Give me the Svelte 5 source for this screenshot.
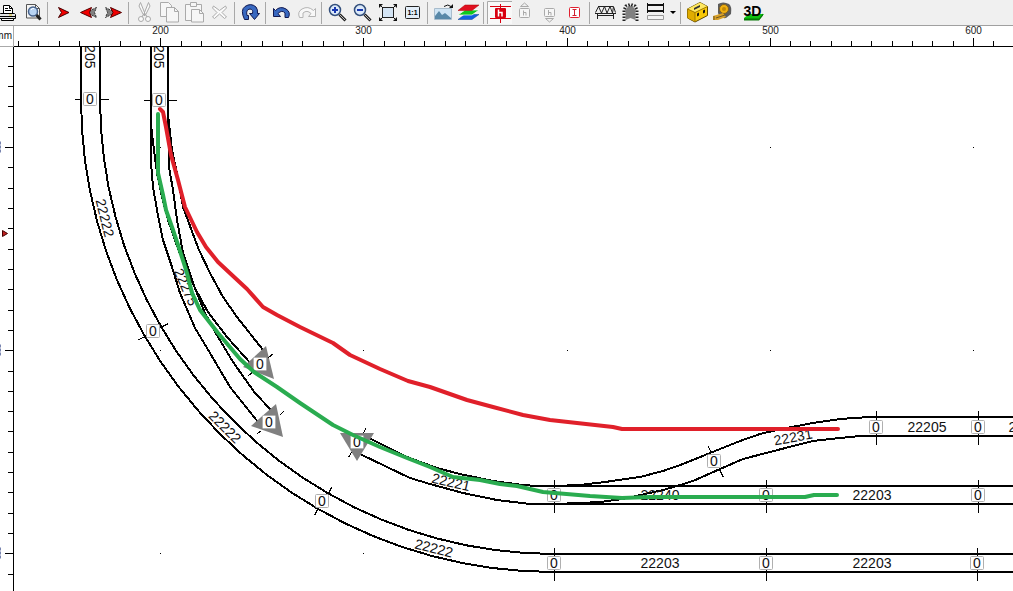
<script>
  const pressedHatch =
    '<path d="M0 1h25v23H0z" fill="#f8f8f8"/><path d="M0.5 24V1.5H25" fill="none" stroke="#a8a8a8"/>';

  const groups = [
    [
      { name: 'Print', art: '<path d="M8.500 13.500V5.500H14.500L17.500 8.500V13.500z" fill="#fff" stroke="#000"/><path d="M14.500 5.500v3h3M10 8.500h3M10 10.500h6" stroke="#000" fill="none"/><path d="M5.500 13.500h14l1 1v4h-16v-4z" fill="#e4e4e4" stroke="#000"/><path d="M5 16.500h15" stroke="#000"/><path d="M14 15h3" stroke="#d8c020"/><path d="M6.500 18.500h12v2h-12z" fill="#fff" stroke="#000"/>' },
      { name: 'Print preview', art: '<path d="M6.500 4.500h9l4 4v9.500h-13z" fill="#f4f4f4" stroke="#555"/><path d="M15.500 4.500v4h4" fill="none" stroke="#555"/><circle cx="13" cy="11.500" r="4.500" fill="#b8d4f4" stroke="#46628c" stroke-width="1.500"/><path d="M11 10q1-2 3-1.500" stroke="#fff" fill="none"/><path d="M16.500 15l4 4.500" stroke="#222" stroke-width="3"/>' }
    ],
    [
      { name: 'Start', art: '<path d="M7.500 7.500L18 12.500L7.500 17.500L10.500 12.500z" fill="#f00000" stroke="#400" />' },
      { name: 'Step back', art: '<path d="M20.500 7.500L10 12.500L20.500 17.500L18.500 12.500z" fill="#808080" stroke="#333" stroke-dasharray="2 1"/><path d="M15.500 7.500L4.500 12.500L15.500 17.500L13.500 12.500z" fill="#f00000" stroke="#500"/>' },
      { name: 'Step forward', art: '<path d="M4.500 7.500L14.500 12.500L4.500 17.500L6.500 12.500z" fill="#808080" stroke="#333" stroke-dasharray="2 1"/><path d="M9.500 7.500L20.500 12.500L9.500 17.500L12 12.500z" fill="#f00000" stroke="#500"/>' }
    ],
    [
      { name: 'Cut', art: '<g fill="#fafafa" stroke="#aaa"><path d="M8.500 2.500L7 6l4.500 9h2L9.500 5zM16.500 2.500L18 6l-4.500 9h-2L15.500 5z"/><circle cx="9" cy="19" r="2.500"/><circle cx="16" cy="19" r="2.500"/><path d="M12.500 12v4M11 15l-1 2M14 15l1 2" fill="none"/></g>' },
      { name: 'Copy', art: '<g fill="#f6f6f6" stroke="#aaa"><path d="M3.500 2.500h8l3 3v11h-11z"/><path d="M9.500 7.500h8l4 4v10.500h-12z"/><path d="M17.500 7.500v4h4" fill="none"/></g>' },
      { name: 'Paste', art: '<g fill="#f6f6f6" stroke="#aaa"><path d="M3.500 4.500h16v16h-16z"/><path d="M8.500 2.500h6v4h-6z"/><path d="M9.500 9.500h8l4 4v8.500h-12z"/><path d="M17.500 9.500v4h4" fill="none"/></g>' },
      { name: 'Delete', art: '<path d="M6.500 6l6 4.500l6-4.500l1 2l-4.500 4.500l4.500 4.500l-2 1.500l-5-4.500l-5 4.500l-2-1.500l4.500-4.500l-4.500-4.500z" fill="#fafafa" stroke="#aaa"/>' }
    ],
    [
      { name: 'Rotate', art: '<path d="M10.500 19.500H6.500Q2 10 7 6.500Q13 2.500 18 7Q20 9.500 19.500 13.500H21.500L16.500 19.500L11.500 13.500H14.500Q15.500 9.500 12 9Q7.500 9.500 9 15.500H10.500z" fill="#3868c0" stroke="#101850"/>' }
    ],
    [
      { name: 'Undo', art: '<path d="M4.500 8.500V16.500H11.500L9 13.500Q13 9.500 16 13V17.500H19.500Q22 12 17 9Q11 5.500 6.500 10.500z" fill="#3868c0" stroke="#101850"/>' },
      { name: 'Redo', art: '<path d="M21.500 8.500V16.500H14.500L17 13.500Q13 9.500 9 13V17.500H5.500Q3 12 8 9Q14 5.500 19.500 10.500z" fill="#f8f8f8" stroke="#b4b4b4"/>' }
    ],
    [
      { name: 'Zoom in', art: '<path d="M14.500 14.500l6 6" stroke="#222" stroke-width="3"/><path d="M15 15l5 5" stroke="#bbb"/><circle cx="10" cy="10" r="5.500" fill="#dceafa" stroke="#34507c" stroke-width="1.500"/><path d="M7 10h6M10 7v6" stroke="#1838b0" stroke-width="2"/>' },
      { name: 'Zoom out', art: '<path d="M14.500 14.500l6 6" stroke="#222" stroke-width="3"/><path d="M15 15l5 5" stroke="#bbb"/><circle cx="10" cy="10" r="5.500" fill="#dceafa" stroke="#34507c" stroke-width="1.500"/><path d="M7 10h6" stroke="#1838b0" stroke-width="2"/>' },
      { name: 'Zoom to fit', art: '<path d="M7.500 7.500h11v10h-11z" fill="#d4e4f4" stroke="#222"/><path d="M4 4h4l-4 4zM22 4h-4l4 4zM4 21h4l-4-4zM22 21h-4l4-4z" fill="#111"/><path d="M5 5l3 3M21 5l-3 3M5 20l3-3M21 20l-3-3" stroke="#111"/>' },
      { name: 'Actual size', art: '<rect x="5.500" y="6.500" width="14" height="12" rx="1" fill="#e2edf8" stroke="#222"/><text x="12.500" y="15" text-anchor="middle" font-size="7" font-weight="700" font-family="Liberation Sans, sans-serif">1:1</text>' }
    ],
    [
      { name: 'Background image', art: '<path d="M3.500 8.500h17v11h-17z" fill="#cfe4f4" stroke="#a8bccc"/><path d="M4 19v-3l4-5l3 4l3-2l6 5v1z" fill="#5888a8"/><path d="M13 6.500q4-3 7 0" fill="none" stroke="#111"/><path d="M22 4v4h-4z" fill="#111"/>' },
      { name: 'Layers', art: '<path d="M2 19.500l7-5h14l-7 5z" fill="#1060e0" stroke="#104090" stroke-width=".5"/><path d="M2 15l7-5h14l-7 5z" fill="#10c820" stroke="#fff" stroke-width=".7"/><path d="M2 10.500l7-5.500h14l-7 5.500z" fill="#e01020" stroke="#a00" stroke-width=".5"/>' }
    ],
    [
      { name: 'Current height', pressed: true, art: pressedHatch + '<path d="M3 6.500h21M3 18.500h21M13.500 4v19" stroke="#d80010"/><rect x="8" y="8" width="11" height="10" rx="1" fill="#d80010"/><path d="M11.500 9.500v7M11.500 12.500h3.500v4" stroke="#fff" stroke-width="1.500" fill="none"/>' },
      { name: 'Height above', art: '<g fill="none" stroke="#aaa"><rect x="7.500" y="8.500" width="10" height="9" rx="1" fill="#f6f6f6"/><path d="M11.500 10.500v5M11.500 12.500h2.500v3M8.500 6.500h8l-4-3.500z"/></g>' },
      { name: 'Height below', art: '<g fill="none" stroke="#aaa"><rect x="7.500" y="8.500" width="10" height="8" rx="1" fill="#f6f6f6"/><path d="M11.500 10v5M11.500 12.500h2.500v3M8.500 18.500h8l-4 3.500z"/></g>' },
      { name: 'Height text', art: '<rect x="7.500" y="7.500" width="10" height="10" rx="1" fill="#fff" stroke="#e02030"/><path d="M10.500 9.500h4M10.500 15.500h4M12.500 9.500v6" stroke="#d02030"/>' }
    ],
    [
      { name: 'Bridge', art: '<path d="M2 13.500h21M5 6.500h15M5 15.500h15M5.500 6.500L2.500 12.500M5.500 6.500L8.500 13L11.500 6.500L14 13L17 6.500L19.500 13L20.500 6.500L22.500 12.500M4.500 14v5M20.500 14v5" fill="none" stroke="#222"/>' },
      { name: 'Tunnel', art: '<path d="M7.500 20V10l3-4h4l3 4v10l-5-2z" fill="#808080"/><path d="M6 21V10L8 6l4-1.500h1L17 6l2 4v11" fill="none" stroke="#222" stroke-width="3" stroke-dasharray="1.500 1.500"/>' },
      { name: 'Track style', drop: true, art: '<path d="M4 5h17M4 11h17" stroke="#111" stroke-width="2"/><path d="M4.500 3v10M20.500 3v10" stroke="#111"/><path d="M4.500 15.500h16v4h-16z" fill="#f4f4f4" stroke="#999"/>' }
    ],
    [
      { name: 'Toolbox', art: '<path d="M3.500 9L16 2.500l7.500 4v9L11 22l-7.500-4z" fill="#f8c808" stroke="#604800"/><path d="M3.500 9L11 12.500v9L3.500 18z" fill="#e0ac00"/><path d="M3.500 9L16 2.500l7.500 4L11 12.500z" fill="#ffe860"/><path d="M11 12.500V22M3.500 9L11 12.500L23.500 6.500" fill="none" stroke="#a07800"/><path d="M10 8l6-3v2l-6 3z" fill="#333"/><path d="M13 13.500l2-1v3l-2 1zM19 10.500l2-1v3l-2 1z" fill="#111"/>' },
      { name: 'Measure', art: '<path d="M9 4q5-3 11 0q3 2 2 10l-5 4q-6 1-8-5z" fill="#5c5c5c"/><circle cx="15" cy="9" r="4.500" fill="#f0b010" stroke="#806020"/><circle cx="15" cy="9" r="2" fill="#c08808"/><path d="M4 16l10-3l3 4l-8 3l-5 0z" fill="#d8a028"/><path d="M7 18l9-3M5 20v-4" stroke="#705820"/>' }
    ],
    [
      { name: '3D view', art: '<path d="M4 18l5-4h15l-5 6H4z" fill="#10c010"/><path d="M4 18.500h15l4-5v2l-4 5H4z" fill="#067806"/><text x="12.500" y="16" text-anchor="middle" font-size="14" font-weight="700" font-family="Liberation Sans, sans-serif">3D</text>' }
    ]
  ];

  const PITCH = 20.32;
  let rulerWidth = $state(1000);
  let rulerHeight = $state(545);

  const hTicks = $derived(
    Array.from({ length: 200 }, (_, i) => i - 7)
      .map((k) => ({
        x: Math.round(160.2 + k * PITCH) + 0.5,
        major: k % 10 === 0,
        label: 200 + k * 10
      }))
      .filter((t) => t.x < rulerWidth + (t.major ? 2 : 14))
  );
  const vTicks = $derived(
    Array.from({ length: 120 }, (_, i) => i - 4)
      .map((k) => ({ y: Math.round(147 + k * PITCH) + 0.5, major: k % 10 === 0 }))
      .filter((t) => t.y < rulerHeight + 47)
  );

  const gridDots = [[160, 147], [770, 147], [973, 147], [160, 350], [363, 350], [567, 350], [770, 350], [973, 350], [160, 553], [363, 553]];

  // Points along a quarter circle that runs from straight down to straight right.
  function arc(cx, cy, r) {
    const n = 24;
    return Array.from({ length: n + 1 }, (_, i) => {
      const a = (i / n) * (Math.PI / 2);
      return `${(cx - r * Math.cos(a)).toFixed(1)},${(cy + r * Math.sin(a)).toFixed(1)}`;
    }).join(' ');
  }

  const rails = [
    `81,40 ${arc(554, 99, 473)} 3000,572`,
    `100,40 ${arc(555, 99, 455)} 3000,554`,
    '151,40 151,147 151,163 153,187 157,210 163,240 172,267 180,293 195,328 210,353 230,387 258,422',
    '168,40 168,117 169,167 173,190 177,220 183,253 193,283 205,313 218,337 233,362 245,379 255,393 271,410',
    '151,125 154,150 157,173 162,197 168,220 176,243 185,267 197,292 208,312 227,337 252,365',
    '168,115 172,150 177,173 183,207 190,226 199,250 210,273 223,297 237,317 263,350',
    '369,438 407,457 437,468 460,474 493,481 523,485 537,486 3000,486',
    '360,454 387,467 410,478 430,484 463,493 497,500 530,504 3000,504',
    '554,486 580,485 605,482 640,477 663,471 683,464 710,453 740,441 760,434 777,430 797,426 813,423 840,419 870,417 3000,417',
    '554,504 580,503 600,502 623,499 645,494 663,490 677,486 693,481 720,469 743,459 770,452 797,445 813,441 840,438 860,436 3000,436'
  ];

  const joints = [
    [74, 99, 81, 99], [100, 99, 108, 99], [143, 100, 150, 100], [168, 100, 176, 100],
    [138, 339, 145, 336], [160, 327, 168, 323], [331, 487, 328, 493], [314, 515, 317, 509],
    [708, 446, 711, 453], [719, 469, 723, 477],
    [273, 353, 268, 357], [248, 375, 253, 371], [283, 411, 279, 415], [257, 433, 261, 430],
    [365, 428, 363, 433], [348, 457, 351, 452],
    [876, 410, 876, 423], [876, 430, 876, 444], [978, 410, 978, 423], [978, 430, 978, 444],
    [554, 479, 554, 490], [554, 500, 554, 512], [766, 479, 766, 490], [766, 500, 766, 512], [978, 479, 978, 490], [978, 500, 978, 512],
    [554, 547, 554, 558], [554, 568, 554, 580], [766, 547, 766, 558], [766, 568, 766, 580], [977, 547, 977, 558], [977, 568, 977, 580]
  ];

  const openEnds = ['266,346 274,379 243,367', '276,404 283,437 251,426', '340,433 374,433 357,461'];

  const heights = [
    [90, 99], [159, 100], [153, 331], [322, 501], [554, 563], [766, 563], [977, 563],
    [554, 495], [766, 495], [978, 495], [876, 427], [978, 427], [714, 461],
    [260, 364], [269, 422], [357, 442]
  ];

  const parts = [
    ['22205', 90, 49, 90], ['22205', 159, 49, 90],
    ['22222', 105, 218, 76], ['22222', 225, 427, 45], ['22222', 434, 548, 14],
    ['22275', 186, 287, 66], ['22221', 451, 482, 13], ['22231', 793, 437, -11],
    ['22240', 660, 495, 0], ['22205', 927, 427, 0], ['22205', 1028, 427, 0],
    ['22203', 872, 495, 0], ['22203', 660, 563, 0], ['22203', 872, 563, 0]
  ];

  const redRoute =
    '160,109 163,112 166,127 171,155 178,180 185,207 197,232 206,247 218,262 233,276 247,289 263,307 277,315 300,327 333,343 350,355 380,369 408,381 430,387 467,400 493,407 523,415 550,420 577,423 613,427 622,429 838,429';
  const greenRoute =
    '158,114 158,173 163,195 166,210 173,230 179,248 187,273 192,293 200,310 218,333 240,359 254,372 277,387 300,403 312,411 333,425 353,435 380,447 407,458 430,467 453,477 480,480 500,484 517,486 543,492 590,496 622,498 650,497 805,497 814,495 837,495';
</script>

<div class="app">
  <nav class="toolbar" aria-label="Tools">
    {#each groups as group, g}
      <div class="group" class:plain={g === groups.length - 1}>
        {#each group as tool}
          <button type="button" aria-label={tool.name} aria-pressed={tool.pressed ? 'true' : undefined}>
            <svg viewBox="0 0 25 25" width="25" height="25" aria-hidden="true">{@html tool.art}</svg>
          </button>
          {#if tool.drop}
            <button type="button" class="drop" aria-label="Track style options">
              <svg viewBox="0 0 10 25" width="10" height="25" aria-hidden="true"><path d="M2 11h6l-3 3z" /></svg>
            </button>
          {/if}
        {/each}
      </div>
    {/each}
  </nav>

  <main class="workspace">
    <div class="unit"><span>mm</span></div>
    <div class="ruler across" bind:clientWidth={rulerWidth}>
      <svg aria-hidden="true">
        <g transform="translate(-14 -26)">
          {#each hTicks as t}
            <line x1={t.x} x2={t.x} y1={t.major ? 38 : 41} y2="46" />
            {#if t.major}<text x={t.x} y="34" text-anchor="middle">{t.label}</text>{/if}
          {/each}
        </g>
      </svg>
    </div>
    <div class="ruler down" bind:clientHeight={rulerHeight}>
      <svg aria-hidden="true">
        <g transform="translate(0 -47)">
          {#each vTicks as t}
            <line y1={t.y} y2={t.y} x1={t.major ? 5 : 8} x2="13" />
            {#if t.major}<path class="mark" d="M.500 {t.y - 6}v3m0 1v3m0 1v3" />{/if}
          {/each}
          <path class="cursor" d="M2.500 230.500v6l5-3z" />
        </g>
      </svg>
    </div>
    <svg class="plan" role="img" aria-label="Track plan">
      <g transform="translate(-14 -47)">
        {#each gridDots as [x, y]}
          <rect class="dot" {x} {y} width="1" height="1" />
        {/each}
        {#each rails as points}
          <polyline class="rail" {points} />
        {/each}
        {#each openEnds as points}
          <polygon class="end" {points} />
        {/each}
        {#each joints as [x1, y1, x2, y2]}
          <line class="joint" x1={x1 + 0.5} y1={y1 + 0.5} x2={x2 + 0.5} y2={y2 + 0.5} />
        {/each}
        {#each heights as [x, y]}
          <rect class="tag" x={x - 6.5} y={y - 6.5} width="13" height="13" rx="1" />
          <text {x} y={y + 5} text-anchor="middle">0</text>
        {/each}
        {#each parts as [label, x, y, angle]}
          <text text-anchor="middle" transform="translate({x} {y}) rotate({angle})" y="5">{label}</text>
        {/each}
        <polyline class="route red" points={redRoute} />
        <polyline class="route green" points={greenRoute} />
      </g>
    </svg>
  </main>
</div>

<style>
  :global(body) {
    margin: 0;
    background: #fff;
  }
  .app {
    display: flex;
    flex-direction: column;
    height: 100vh;
    overflow: hidden;
    font-family: 'Liberation Sans', Arial, sans-serif;
    color: #111;
  }
  .toolbar {
    display: flex;
    flex: none;
    height: 25px;
    padding-right: 5px;
    background: #f0f0f0;
    border-bottom: 1px solid #a0a0a0;
    overflow: hidden;
  }
  .group {
    display: flex;
    flex: none;
  }
  .group:first-child {
    margin-left: -5px;
  }
  .group:not(:first-child)::before {
    content: '';
    width: 1px;
    height: 22px;
    margin: 2px 3px 1px 2px;
    background: #a8a8a8;
  }
  .group.plain::before {
    background: transparent;
  }
  button {
    display: block;
    padding: 0;
    border: 0;
    background: none;
  }
  svg {
    display: block;
  }
  .workspace {
    flex: 1;
    min-height: 0;
    display: grid;
    grid-template-columns: 14px minmax(0, 1fr);
    grid-template-rows: 21px minmax(0, 1fr);
    background: #fff;
  }
  .unit {
    display: flex;
    justify-content: flex-end;
    align-items: center;
    overflow: hidden;
    padding-right: 1px;
    font-size: 10px;
    line-height: 20px;
    border-right: 1px solid #aaa;
    border-bottom: 1px solid #aaa;
    box-sizing: border-box;
  }
  .ruler {
    box-sizing: border-box;
    overflow: hidden;
  }
  .ruler svg,
  .plan {
    width: 100%;
    height: 100%;
    overflow: hidden;
  }
  .ruler line {
    stroke: #000;
    shape-rendering: crispEdges;
  }
  .ruler text {
    font-size: 10px;
    fill: #222;
  }
  .across {
    border-bottom: 1px solid #000;
  }
  .down {
    border-right: 1px solid #000;
  }
  .mark {
    stroke: #7884b0;
  }
  .cursor {
    fill: #c02020;
    stroke: #400;
  }
  .rail {
    fill: none;
    stroke: #000;
    stroke-width: 2;
    shape-rendering: crispEdges;
  }
  .joint {
    stroke: #000;
    shape-rendering: crispEdges;
  }
  .end {
    fill: #808080;
  }
  .tag {
    fill: #fff;
    stroke: #b0b0b0;
  }
  .plan text {
    font-size: 14px;
    fill: #111;
  }
  .route {
    fill: none;
    stroke-width: 4;
    stroke-linejoin: round;
    stroke-linecap: round;
  }
  .red {
    stroke: #e0202a;
  }
  .green {
    stroke: #2aac50;
  }
</style>
